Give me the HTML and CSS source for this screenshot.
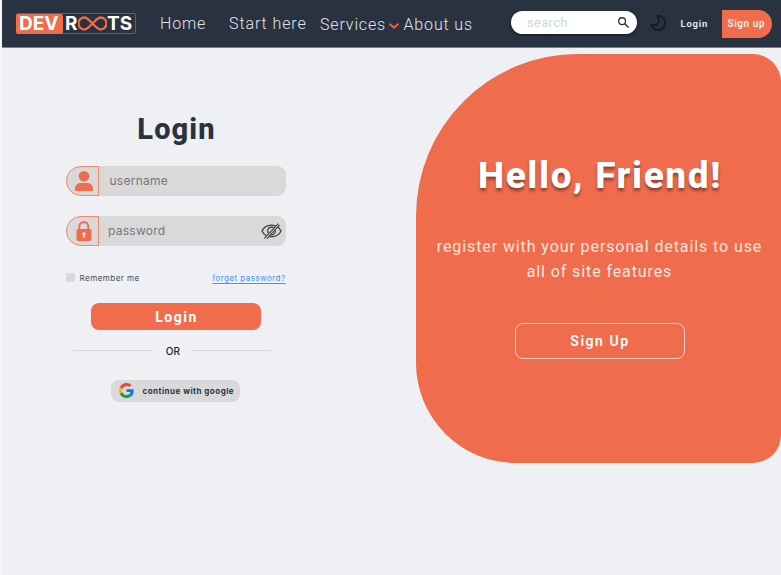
FILE: index.html
```html
<!DOCTYPE html>
<html lang="en">
<head>
<meta charset="utf-8">
<title>Dev Roots – Login</title>
<link rel="stylesheet" href="styles.css">
</head>
<body>
<div class="page">
  <header class="nav">
    <a class="logo"><span class="logo-dev">DEV</span><span class="logo-r">R</span><svg class="logo-loop" viewBox="0 0 29 15"><path d="M14.5 7.500C11 4 9 1.500 6.500 1.500a6 6 0 0 0 0 12C9 13.500 11 11 14.500 7.500S20 1.500 22.500 1.500a6 6 0 0 1 0 12C20 13.500 18 11 14.500 7.500Z" fill="none" stroke="#ef6c4d" stroke-width="2.300"/></svg><span class="logo-ts">TS</span></a>
    <nav class="links">
      <a class="home">Home</a><a class="start">Start here</a><a class="services">Services</a><svg class="chevron" viewBox="0 0 12 8"><path d="M1.500 1.700 6 5.800l4.500-4.100" fill="none" stroke="#ef6140" stroke-width="1.900"/></svg><a class="about">About us</a>
    </nav>
    <div class="search"><span>search</span><svg class="lens" viewBox="0 0 12 12"><circle cx="4.500" cy="4.500" r="3.700" fill="none" stroke="#333" stroke-width="1.400"/><path d="m7.200 7.200 4.300 4.300" stroke="#333" stroke-width="1.600"/></svg></div>
    <svg class="moon" viewBox="0 0 16 16"><path d="M7.500 1C15 .3 17.500 9.500 12 13.700 8 16.500 2.500 14.600 1 9.500 6.500 12.500 11.500 7 7.500 1Z" fill="none" stroke="#191b22" stroke-width="1.800" stroke-linejoin="round"/></svg>
    <a class="nav-login">Login</a>
    <a class="nav-signup">Sign up</a>
  </header>
  <main class="content">
    <section class="form">
      <h1>Login</h1>
      <div class="field user"><span class="icon"><svg viewBox="0 0 18 20"><circle cx="9" cy="5.300" r="5.300"/><path d="M0 18.500C0 14 2.500 12 6 12h6c3.500 0 6 2 6 6.500 0 1-.5 1.500-1.500 1.500h-15C.5 20 0 19.500 0 18.500Z"/></svg></span><span class="hint">username</span></div>
      <div class="field pass"><span class="icon"><svg viewBox="0 0 18 20"><path fill-rule="evenodd" d="M3.400 8V5.400a5.400 5.400 0 0 1 10.800 0V8c1.600 0 2.300.7 2.300 2v8c0 1.300-.7 2-2 2h-11c-1.300 0-2-.7-2-2v-8c0-1.300.7-2 1.900-2Zm1.900 0h7V5.400a3.500 3.500 0 0 0-7 0ZM8 14.300V17h1.800v-2.700a1.700 1.700 0 1 0-1.800 0Z"/></svg></span><span class="hint">password</span><svg class="eye" viewBox="0 0 21 16"><g fill="none" stroke="#4a4a4a" stroke-width="1.400"><path d="M1 8C4.500.4 16.500.4 20 8 16.500 15.600 4.500 15.600 1 8Z"/><circle cx="10.500" cy="8" r="3.800"/><path d="M4.400 15.400 17.800 1.100" stroke="#d9d9d9" stroke-width="2.600"/><path d="M3.300 15.300 17.300.7M5.800 15.600 18.600 1.800" stroke-width="1.200"/></g></svg></div>
      <div class="options"><span class="check"></span><span class="remember">Remember me</span><a class="forgot">forget password?</a></div>
      <button class="submit"><span>Login</span></button>
      <div class="or"><i></i><span>OR</span><i></i></div>
      <button class="google"><svg viewBox="0 0 48 48"><path fill="#ea4335" d="M24 9.500c3.500 0 6.700 1.200 9.200 3.600l6.900-6.900C35.900 2.400 30.500 0 24 0 14.600 0 6.500 5.400 2.600 13.200l8 6.200C12.400 13.700 17.700 9.500 24 9.500z"/><path fill="#1a73e8" d="M47 24.600c0-1.600-.2-3.100-.4-4.600H24v9h12.900c-.6 3-2.200 5.500-4.700 7.200l7.700 6C44.400 38 47 32 47 24.600z"/><path fill="#fbbc05" d="M10.500 28.600a14.500 14.500 0 0 1 0-9.200l-8-6.200a24 24 0 0 0 0 21.600z"/><path fill="#1e9b45" d="M24 48c6.500 0 11.900-2.100 15.900-5.800l-7.700-6c-2.200 1.500-4.900 2.300-8.200 2.300-6.300 0-11.600-4.200-13.500-9.900l-8 6.200C6.500 42.600 14.600 48 24 48z"/></svg><span>continue with google</span></button>
    </section>
    <section class="welcome">
      <h2>Hello, Friend!</h2>
      <p>register with your personal details to use<br>all of site features</p>
      <button class="join"><span>Sign Up</span></button>
    </section>
  </main>
</div>
</body>
</html>
```
FILE: styles.css
```css
* { box-sizing: border-box; }
body { margin: 0; background: #f7f7f7; font-family: Roboto, "Liberation Sans", sans-serif; }
button { border: 0; padding: 0; font-family: inherit; display: flex; align-items: center; justify-content: center; }
svg { display: block; flex: none; }
a, span { white-space: nowrap; }
.page { width: 779px; height: 575px; margin-left: 2px; background: #eff0f4; overflow: hidden; }
.nav { display: flex; width: 779px; height: 47.500px; background: #293241; border-bottom: 1px solid #7b828c; }
.logo { display: flex; align-items: center; width: 120px; height: 21px; margin: 13px 0 0 14px; border: 1px solid #93503f; border-radius: 2px; font: 700 19px/19px Inter, sans-serif; color: #fff; flex: none; }
.logo-dev { width: 47px; height: 20px; line-height: 20px; margin-left: -1px; padding-left: 3px; background: #ef6c4d; border-radius: 2px; }
.logo-r { width: 15px; padding-left: 2px; }
.logo-loop { width: 29px; height: 15px; }
.logo-ts { letter-spacing: 0; }
.links { display: flex; width: 353px; flex: none; color: #e3e4e7; font-weight: 300; font-size: 16px; line-height: 20px; letter-spacing: .85px; }
.home { width: 69px; margin: 14px 0 0 24px; letter-spacing: .8px; }
.start { width: 91px; margin-top: 14px; letter-spacing: .9px; }
.services { width: 68px; margin-top: 15px; }
.chevron { width: 12px; height: 8px; margin: 22px 3.500px 0 0; }
.about { margin-top: 15px; }
.search { display: flex; align-items: center; justify-content: space-between; width: 126px; height: 23px; margin: 11px 0 0 22px; flex: none; padding: 0 8px 0 16px; background: #fff; border-radius: 12px; box-shadow: 0 1px 3px #0009; color: #cbd9d9; font-size: 13px; letter-spacing: .3px; line-height: 23px; }
.lens { width: 11px; height: 11px; }
.moon { width: 16px; height: 16px; margin: 15px 0 0 12.500px; }
.nav-login { width: 41px; margin: 14px 0 0 15px; color: #eceef0; font-weight: 600; font-size: 9.500px; letter-spacing: .8px; line-height: 20px; }
.nav-signup { width: 50.500px; height: 27.500px; margin-top: 10px; padding-left: 6px; border-radius: 0 14px 14px 0; background: #ef6c4d; color: #f5f0ee; font-weight: 600; font-size: 10px; letter-spacing: .55px; line-height: 28px; }
.content { display: flex; justify-content: space-between; }
.form { width: 220px; margin-left: 63.500px; }
h1 { margin: 61.500px 0 0 2px; font-size: 29px; line-height: 40px; font-weight: 800; letter-spacing: 1.100px; color: #293241; text-align: center; }
.field { display: flex; align-items: center; width: 220px; height: 30px; border-radius: 15px 9px 9px 15px; background: #d9d9d9; color: #747780; font: 400 12px/30px Inter, sans-serif; }
.user { margin-top: 16.500px; }
.pass { margin-top: 20px; }
.icon { display: flex; align-items: center; width: 33px; height: 30px; padding-left: 8px; border: 1px solid #f1896f; border-radius: 15px 0 0 15px; }
.icon svg { width: 18px; height: 20px; fill: #ef6c4d; }
.hint { margin-left: 11px; letter-spacing: .26px; }
.pass .hint { margin-left: 9.500px; }
.eye { width: 21px; height: 16px; margin-left: auto; margin-right: 4px; }
.options { display: flex; align-items: center; height: 14px; margin-top: 25px; font: 400 8px/14px Inter, sans-serif; letter-spacing: .48px; color: #454d5b; }
.check { width: 9px; height: 9px; border-radius: 2px; background: #d9d9d9; }
.remember { margin-left: 5px; }
.forgot { margin-left: auto; color: #3b96ff; text-decoration: underline; text-underline-offset: 2px; letter-spacing: .46px; }
.submit { width: 170px; height: 27px; margin: 18.500px 0 0 25.500px; border-radius: 8px; background: #ef6c4d; color: #fff; font-size: 14px; font-weight: 700; letter-spacing: 1.500px; }
.submit span { padding-left: 1px; }
.or { display: flex; align-items: center; justify-content: space-between; width: 198px; height: 14px; margin: 13.500px 0 0 7px; font: 500 10px/14px Inter, sans-serif; letter-spacing: .3px; color: #222; }
.or span { padding-left: 3px; }
.or i { width: 79px; height: 1px; background: #d4d5d8; }
.google { justify-content: flex-start; width: 129px; height: 22px; margin: 22px 0 0 45.500px; padding-left: 8px; border-radius: 8px; background: #d9d9d9; color: #293241; font: 700 8px/22px Inter, sans-serif; letter-spacing: .48px; }
.google svg { width: 15px; height: 15px; margin-right: 8.500px; }
.welcome { display: flex; flex-direction: column; align-items: center; width: 365px; height: 409px; margin-top: 6.500px; border-radius: 162px 28px 28px 100px; background: #ef6c4d; color: #fff; }
h2 { margin: 98px 0 0 3px; font-size: 37px; line-height: 48px; font-weight: 800; letter-spacing: 1.640px; text-shadow: 0 3px 3px #0006; white-space: nowrap; }
p { margin: 35px 0 0 2px; font-size: 16px; line-height: 24.500px; letter-spacing: .9px; text-align: center; color: #fde6df; white-space: nowrap; }
.join { width: 170px; height: 36px; margin: 38.500px 0 0 3px; border: 1.500px solid #fbd0c5; border-radius: 8px; background: none; color: #fff; font-size: 14px; font-weight: 600; letter-spacing: 1.550px; }
```
